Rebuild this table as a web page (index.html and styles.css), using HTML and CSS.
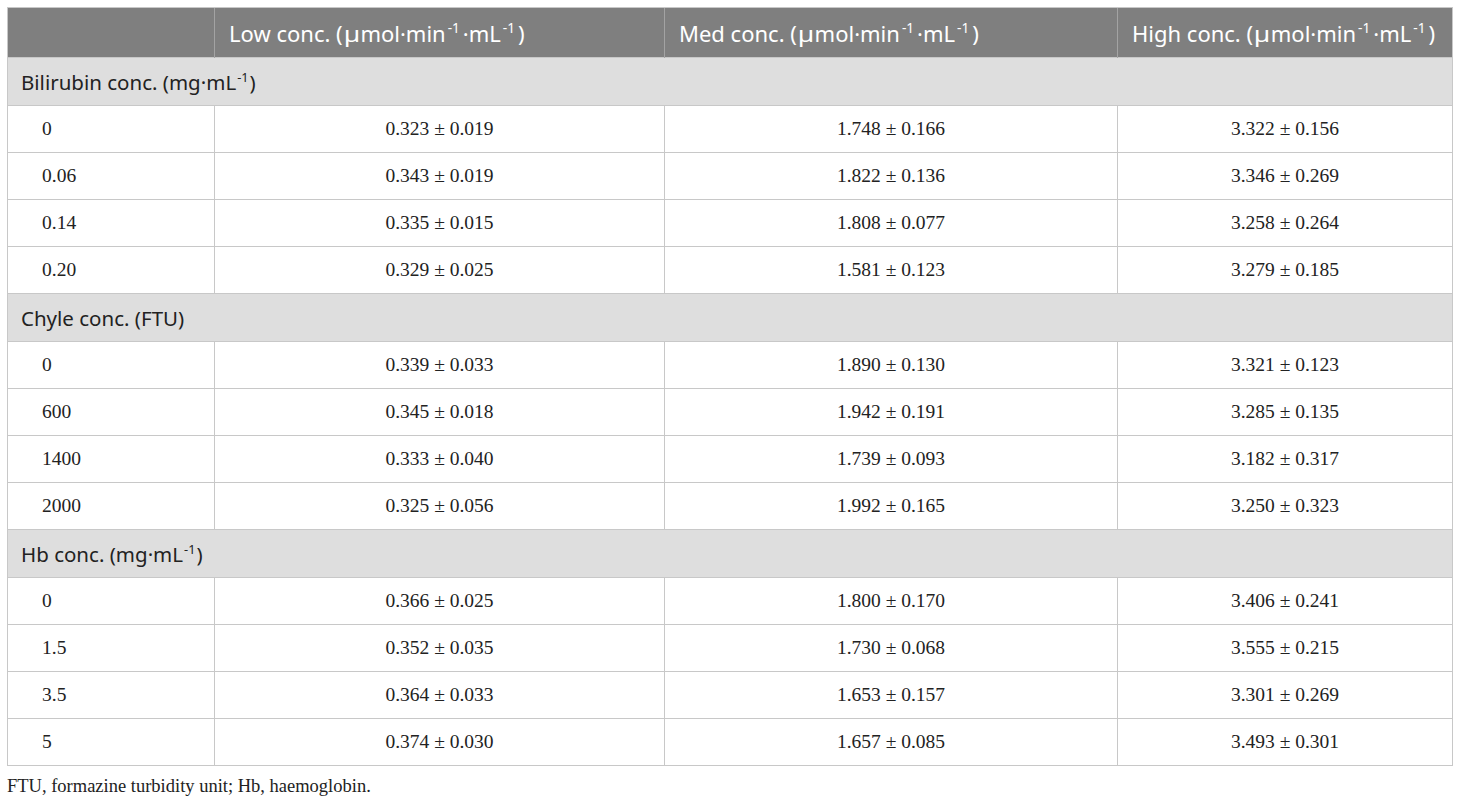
FILE: index.html
```html
<!DOCTYPE html>
<html>
<head>
<meta charset="utf-8">
<link rel="stylesheet" href="styles.css">
</head>
<body>
<div class="wrap">
<table class="tbl">
  <colgroup>
    <col class="c1"><col class="c2"><col class="c3"><col class="c4">
  </colgroup>
  <thead>
    <tr>
      <th></th>
      <th>Low conc. (<span class="mu">µ</span>mol·min<sup>-1</sup>·mL<sup>-1</sup>)</th>
      <th>Med conc. (<span class="mu">µ</span>mol·min<sup>-1</sup>·mL<sup>-1</sup>)</th>
      <th>High conc. (<span class="mu">µ</span>mol·min<sup>-1</sup>·mL<sup>-1</sup>)</th>
    </tr>
  </thead>
  <tbody>
    <tr class="grp"><td colspan="4">Bilirubin conc. (mg·mL<sup>-1</sup>)</td></tr>
    <tr><td>0</td><td>0.323 ± 0.019</td><td>1.748 ± 0.166</td><td>3.322 ± 0.156</td></tr>
    <tr><td>0.06</td><td>0.343 ± 0.019</td><td>1.822 ± 0.136</td><td>3.346 ± 0.269</td></tr>
    <tr><td>0.14</td><td>0.335 ± 0.015</td><td>1.808 ± 0.077</td><td>3.258 ± 0.264</td></tr>
    <tr><td>0.20</td><td>0.329 ± 0.025</td><td>1.581 ± 0.123</td><td>3.279 ± 0.185</td></tr>
    <tr class="grp"><td colspan="4">Chyle conc. (FTU)</td></tr>
    <tr><td>0</td><td>0.339 ± 0.033</td><td>1.890 ± 0.130</td><td>3.321 ± 0.123</td></tr>
    <tr><td>600</td><td>0.345 ± 0.018</td><td>1.942 ± 0.191</td><td>3.285 ± 0.135</td></tr>
    <tr><td>1400</td><td>0.333 ± 0.040</td><td>1.739 ± 0.093</td><td>3.182 ± 0.317</td></tr>
    <tr><td>2000</td><td>0.325 ± 0.056</td><td>1.992 ± 0.165</td><td>3.250 ± 0.323</td></tr>
    <tr class="grp"><td colspan="4">Hb conc. (mg·mL<sup>-1</sup>)</td></tr>
    <tr><td>0</td><td>0.366 ± 0.025</td><td>1.800 ± 0.170</td><td>3.406 ± 0.241</td></tr>
    <tr><td>1.5</td><td>0.352 ± 0.035</td><td>1.730 ± 0.068</td><td>3.555 ± 0.215</td></tr>
    <tr><td>3.5</td><td>0.364 ± 0.033</td><td>1.653 ± 0.157</td><td>3.301 ± 0.269</td></tr>
    <tr><td>5</td><td>0.374 ± 0.030</td><td>1.657 ± 0.085</td><td>3.493 ± 0.301</td></tr>
  </tbody>
</table>
<p class="note">FTU, formazine turbidity unit; Hb, haemoglobin.</p>
</div>
</body>
</html>
```

FILE: styles.css
```css
html, body {
  margin: 0;
  padding: 0;
  background: #ffffff;
}
.wrap {
  padding: 7px 8px 0 7px;
}
.tbl {
  width: 1445px;
  border-collapse: collapse;
  table-layout: fixed;
  font-family: "Liberation Serif", "Times New Roman", serif;
  font-size: 19.5px;
  color: #222222;
}
.c1 { width: 207px; }
.c2 { width: 450px; }
.c3 { width: 453px; }
.c4 { width: 335px; }
.tbl th {
  background: #7f7f7f;
  color: #ffffff;
  font-family: "Noto Sans", "Open Sans", sans-serif;
  font-weight: normal;
  font-size: 22px;
  text-align: left;
  height: 50px;
  padding: 0 12px 0 14px;
  box-sizing: border-box;
  border-left: 1px solid #a3a3a3;
  border-top: 1px solid #c8c8c8;
  white-space: nowrap;
}
.tbl th:first-child { border-left: 1px solid #c8c8c8; }
.tbl th:last-child { border-right: 1px solid #c8c8c8; }
.mu {
  display: inline-block;
  margin: 0 2px 0 2px;
  transform: scaleX(1.2);
}
.tbl sup {
  font-size: 0.62em;
  line-height: 0;
  vertical-align: 0.62em;
}
.tbl th sup {
  padding: 0 3px 0 2px;
}
.tbl td {
  border: 1px solid #c8c8c8;
  height: 47px;
  box-sizing: border-box;
  text-align: center;
  padding: 0 8px;
}
.tbl td:first-child {
  text-align: left;
  padding-left: 34px;
}
.tbl tr.grp td {
  background: #dedede;
  font-family: "Noto Sans", "Open Sans", sans-serif;
  font-size: 20.5px;
  text-align: left;
  padding-left: 13px;
  height: 48px;
}
.tbl tr.grp sup {
  padding: 0 1px;
}
.note {
  margin: 10px 0 0 0;
  font-family: "Liberation Serif", "Times New Roman", serif;
  font-size: 18.5px;
  color: #222222;
}
```
